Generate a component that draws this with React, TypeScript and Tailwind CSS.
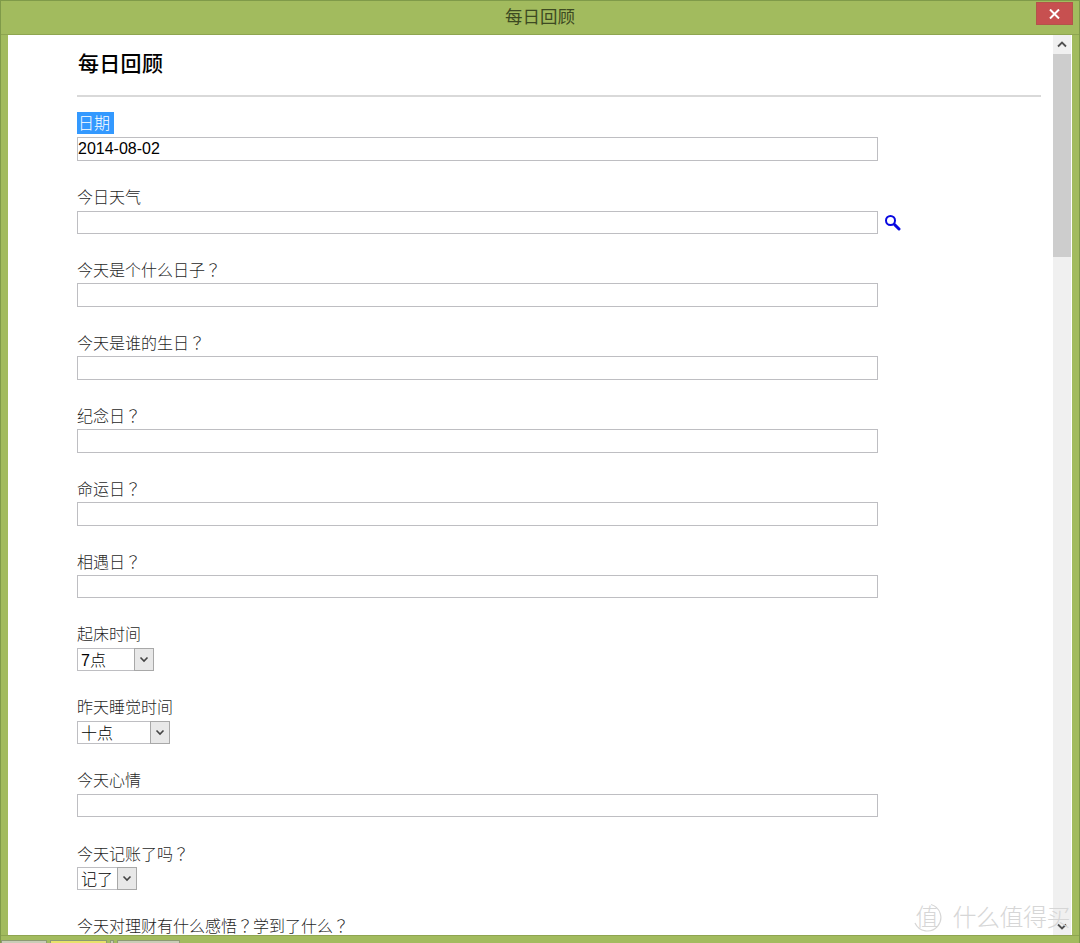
import React from "react";

const cjk = { fontFamily: '"Liberation Sans", "Noto Sans CJK SC", sans-serif' };
const tc = { fontFamily: '"Noto Sans CJK TC", sans-serif' };

function Label({ text }: { text: string }) {
  const parts = text.split("？");
  return (
    <div className="h-[21px] text-[16px] leading-[21px] text-[#1f1f1f] font-light whitespace-nowrap">
      {parts.map((p, i) => (
        <React.Fragment key={i}>
          {p}
          {i < parts.length - 1 && <span style={tc}>？</span>}
        </React.Fragment>
      ))}
    </div>
  );
}

function TextRow({ label, value = "", search = false }: { label: string; value?: string; search?: boolean }) {
  return (
    <div className="h-[72.9px]">
      <Label text={label} />
      <div className="flex items-center mt-[3px]">
        <input
          readOnly
          value={value}
          className="w-[801px] h-[23.5px] border border-[#bebec2] bg-white px-0 text-[16px] text-black outline-none"
          style={cjk}
        />
        {search && (
          <svg width="16" height="16" viewBox="0 0 16 16" className="ml-[7px] mt-[1px]">
            <circle cx="5.5" cy="5.5" r="4.5" fill="none" stroke="#0808e0" strokeWidth="2" />
            <path d="M9.5 9.5 L14 14" stroke="#0808e0" strokeWidth="3" strokeLinecap="round" />
          </svg>
        )}
      </div>
    </div>
  );
}

function SelectRow({ label, value, width }: { label: string; value: string; width: number }) {
  const cls = width === 77 ? "w-[77px]" : width === 93 ? "w-[93px]" : "w-[60px]";
  return (
    <div className="h-[72.9px]">
      <Label text={label} />
      <div className={`relative h-[23.5px] mt-[3px] ${cls}`}>
        <select
          defaultValue={value}
          className="w-full h-full appearance-none border border-[#bebec2] bg-white pl-[3px] text-[16px] font-light text-black outline-none"
          style={cjk}
        >
          <option>{value}</option>
        </select>
        <span className="pointer-events-none absolute right-0 top-0 bottom-0 w-[20px] flex items-center justify-center border border-[#a8a8a8] bg-[#e8e8e8]">
          <svg width="10" height="7" viewBox="0 0 10 7">
            <path d="M1.5 1.5 L5 5 L8.5 1.5" fill="none" stroke="#444" strokeWidth="1.6" />
          </svg>
        </span>
      </div>
    </div>
  );
}

export default function App() {
  return (
    <div className="relative w-[1080px] h-[943px] overflow-hidden flex flex-col bg-[#a2bb5e] border-t border-x border-[#7f9a49]" style={cjk}>
      <div className="absolute right-[1px] top-[-1px] w-[28px] h-[1px] bg-white" />
      <div className="relative h-[34px] shrink-0 flex items-center justify-center text-[17.5px] text-[#3d4a22] border-b border-[#8ea550]">
        每日回顾
        <div className="absolute right-[6px] top-[1px] w-[37px] h-[23px] bg-[#c75050] border border-[#b3544a] flex items-center justify-center">
          <svg width="11" height="10" viewBox="0 0 11 10">
            <path d="M1 0.5 L10 9.5 M10 0.5 L1 9.5" stroke="#fff" strokeWidth="2" />
          </svg>
        </div>
      </div>

      <div className="h-[900px] shrink-0 mx-[7px] bg-white flex overflow-hidden">
        <div className="flex-1 overflow-hidden pl-[69px] pr-[12px]">
          <h1 className="h-[60px] pt-[14px] text-[21px] leading-[29px] font-medium text-black ml-[1px] tracking-[0.3px]">每日回顾</h1>
          <hr className="border-t-2 border-[#d9d9d9]" />
          <div className="h-[89.5px] pt-[15px]">
            <div className="w-[37px] h-[22px] bg-[#3399ff] text-white text-[16px] leading-[24px] pl-[1px] font-light">日期</div>
            <input
              readOnly
              value="2014-08-02"
              className="block mt-[3px] w-[801px] h-[23.5px] border border-[#bebec2] bg-white px-0 text-[16px] text-black outline-none"
              style={cjk}
            />
          </div>
          <TextRow label="今日天气" search />
          <TextRow label="今天是个什么日子？" />
          <TextRow label="今天是谁的生日？" />
          <TextRow label="纪念日？" />
          <TextRow label="命运日？" />
          <TextRow label="相遇日？" />
          <SelectRow label="起床时间" value="7点" width={77} />
          <SelectRow label="昨天睡觉时间" value="十点" width={93} />
          <TextRow label="今天心情" />
          <SelectRow label="今天记账了吗？" value="记了" width={60} />
          <Label text="今天对理财有什么感悟？学到了什么？" />
        </div>

        <div className="w-[18px] shrink-0 mr-[1px] bg-[#f0f0f0] flex flex-col">
          <div className="h-[19px] flex items-center justify-center">
            <svg width="10" height="7" viewBox="0 0 10 7">
              <path d="M1 5.5 L5 1.5 L9 5.5" fill="none" stroke="#505050" strokeWidth="1.8" />
            </svg>
          </div>
          <div className="h-[203px] bg-[#cdcdcd]" />
          <div className="flex-1" />
          <div className="h-[18px] flex items-center justify-center">
            <svg width="10" height="7" viewBox="0 0 10 7">
              <path d="M1 1.5 L5 5.5 L9 1.5" fill="none" stroke="#505050" strokeWidth="1.8" />
            </svg>
          </div>
        </div>
      </div>

      <div className="flex-1 flex items-end border-t border-[#8ea550]">
        <div className="w-[46px] h-[3px] bg-[#c9cdb8] border-x border-t border-[#8d9a73]" />
        <div className="w-[57px] h-[3px] ml-[3px] bg-[#e8e36a] border-x border-t border-[#8d9a73]" />
        <div className="w-[4px] h-[3px] ml-[3px] bg-[#c9cdb8] border-x border-t border-[#8d9a73]" />
        <div className="w-[63px] h-[3px] ml-[3px] bg-[#c9cdb8] border-x border-t border-[#8d9a73]" />
      </div>

      <div className="absolute right-[9px] top-[902px] flex items-center gap-[11px] text-[#d6d6d6]">
        <div className="relative w-[29px] h-[29px] flex items-center justify-center text-[23px] leading-none font-light">
          值
          <svg width="29" height="29" viewBox="0 0 29 29" className="absolute left-0 top-0">
            <path d="M18 1.5 A13.5 13.5 0 1 1 2 20" fill="none" stroke="#d6d6d6" strokeWidth="1.2" />
          </svg>
        </div>
        <span className="text-[24px] leading-[29px] font-light tracking-[-0.5px]">什么值得买</span>
      </div>
    </div>
  );
}
